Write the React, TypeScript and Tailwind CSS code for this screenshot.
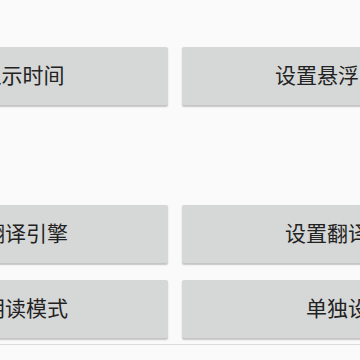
function Btn({ label, className = "" }: { label: string; className?: string }) {
  return (
    <button
      className={
        "w-[294px] h-[58px] shrink-0 flex items-center justify-center pb-[4px] rounded-[2px] bg-[#d6d7d7] text-[21px] leading-none text-[#222] shadow-[0_1.5px_1.5px_rgba(0,0,0,0.22)] " +
        className
      }
    >
      {label}
    </button>
  );
}

export default function App() {
  return (
    <div
      className="w-[360px] h-[360px] overflow-hidden bg-[#fafafa]"
      style={{ fontFamily: '"Noto Sans CJK SC", "Noto Sans", sans-serif' }}
    >
      <div className="ml-[-126px] w-[616px] flex flex-col pt-[47px]">
        <div className="flex gap-[14px]">
          <Btn label="显示时间" className="pl-[3px]" />
          <Btn label="设置悬浮窗" className="pr-[3px]" />
        </div>
        <div className="h-[100px]" />
        <div className="flex gap-[14px]">
          <Btn label="翻译引擎" className="pl-[10px]" />
          <Btn label="设置翻译" className="pr-[4px]" />
        </div>
        <div className="flex gap-[14px] mt-[17px]">
          <Btn label="朗读模式" className="pl-[10px]" />
          <Btn label="单独设置" className="pl-[38px]" />
        </div>
        <div className="mt-[6px] h-px bg-[#dcdcdc]" />
      </div>
    </div>
  );
}
